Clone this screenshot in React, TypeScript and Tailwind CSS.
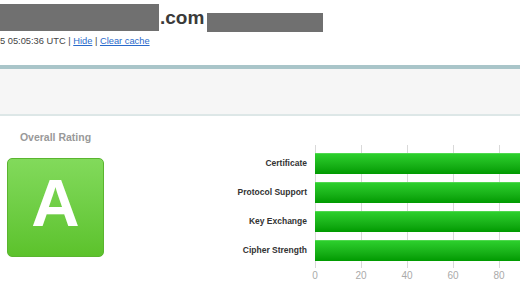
const rows = ["Certificate", "Protocol Support", "Key Exchange", "Cipher Strength"];
const ticks = [0, 20, 40, 60, 80, 100];

const RatingChart = () => {
  return (
    <div className="flex mt-[29px] ml-[103px]">
      <div className="w-[100px] flex flex-col gap-[8px] pt-[8px]">
        {rows.map((r) => (
          <div key={r} className="h-[21px] flex items-center justify-end text-[8.5px] font-bold text-[#333] whitespace-nowrap">
            {r}
          </div>
        ))}
      </div>
      <div className="ml-[8px] shrink-0">
        <div className="relative w-[230px] h-[123px]">
          {ticks.map((t) => (
            <div key={t} className="absolute top-0 bottom-0 w-px bg-[#d9d9d9]" style={{ left: t * 2.3 }} />
          ))}
          <div className="relative flex flex-col gap-[8px] pt-[8px]">
            {rows.map((r) => (
              <div key={r} className="h-[21px] w-full border-t border-[#4fd84f] bg-gradient-to-b from-[#2ccf2c] to-[#009a00]" />
            ))}
          </div>
        </div>
        {/* 100 sits past the window edge */}
        <div className="relative h-[14px] mt-[1px] text-[10px] leading-[14px] text-[#aaa]">
          {ticks.slice(0, 5).map((t) => (
            <span key={t} className="absolute top-0 -translate-x-1/2" style={{ left: t * 2.3 }}>
              {t}
            </span>
          ))}
        </div>
      </div>
    </div>
  );
};

export default function App() {
  return (
    <div className="w-[520px] h-[300px] overflow-hidden bg-white font-['Liberation_Sans',Arial,sans-serif]">
      <div className="flex items-start h-[34px]">
        <div className="mt-[4px] w-[159px] h-[27px] bg-[#707070]" />
        <span className="ml-[1px] mt-[8px] text-[19px] leading-none font-bold text-[#3a3a3a]">.com</span>
        <div className="ml-[3px] mt-[13px] w-[116px] h-[19px] bg-[#707070]" />
      </div>
      <div className="h-[14px] leading-[14px] text-[9.3px] text-[#444] whitespace-nowrap">
        5 05:05:36 UTC |{" "}
        <a href="#" className="text-[#2a6acb] underline">Hide</a> |{" "}
        <a href="#" className="text-[#2a6acb] underline">Clear cache</a>
      </div>
      <div className="mt-[17px] h-[51px] border-t-[4px] border-b-2 border-t-[#a9c5c9] border-b-[#dde7e7] bg-[#f6f6f6]" />
      <div className="flex">
        <div className="ml-[7px] w-[97px] flex flex-col items-center shrink-0">
          <div className="mt-[15px] h-[12px] leading-[12px] text-[10.5px] font-bold text-[#999] whitespace-nowrap">
            Overall Rating
          </div>
          <div className="mt-[15px] w-[97px] h-[99px] rounded-[5px] border border-[#5ab52f] bg-gradient-to-b from-[#82da5b] to-[#5cc22b] flex items-center justify-center pb-[11px]">
            <span className="text-[67px] leading-none font-bold text-white">A</span>
          </div>
        </div>
        <RatingChart />
      </div>
    </div>
  );
}
